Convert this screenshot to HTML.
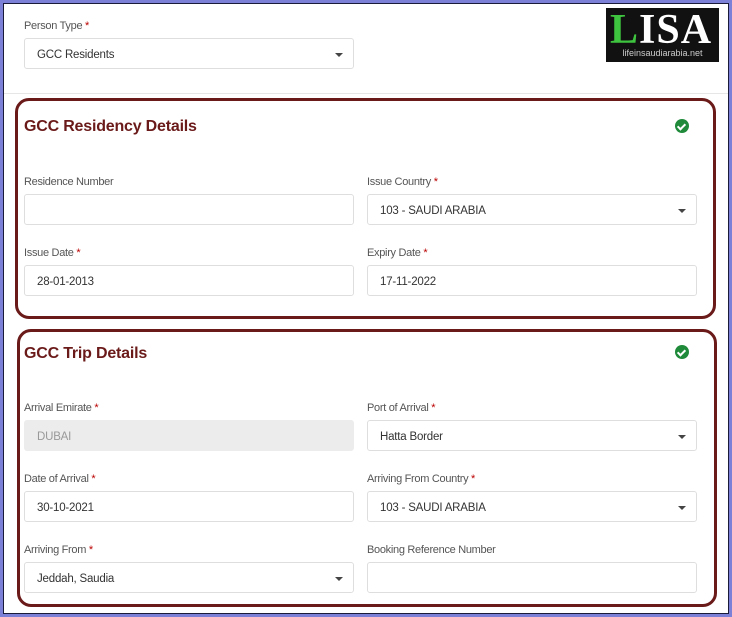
<!DOCTYPE html>
<html><head><style>
*{box-sizing:border-box;margin:0;padding:0}
body{width:732px;height:617px;background:#7c80d6;font-family:"Liberation Sans",sans-serif;position:relative;overflow:hidden}
.frame{position:absolute;left:3px;top:3px;width:726px;height:611px;border:1px solid #1a1a3a;background:#fff}
.abs{position:absolute}
.lbl{position:absolute;font-size:11px;color:#555;letter-spacing:-0.3px}
.lbl b{color:#b00;font-weight:normal}
.in{position:absolute;height:31px;border:1px solid #dedede;border-radius:3px;background:#fff;font-size:11.5px;color:#333;padding:0 12px;line-height:33px;letter-spacing:-0.2px}
.sel:after{content:"";position:absolute;right:10px;top:14px;border-left:4px solid transparent;border-right:4px solid transparent;border-top:4px solid #444}
.box{position:absolute;border:3px solid #6b1a1a;border-radius:14px}
.h{position:absolute;font-size:16px;font-weight:bold;color:#6b1a1a;letter-spacing:-0.2px}
.ck{position:absolute;width:14px;height:14px;border-radius:50%;background:#1e8a3a}
.ck:after{content:"";position:absolute;left:4px;top:2.5px;width:3px;height:6px;border:solid #fff;border-width:0 2px 2px 0;transform:rotate(45deg)}
</style></head><body>
<div class="frame"></div>
<div class="abs" style="left:4px;top:93px;width:724px;height:1px;background:#e6e6e6"></div>
<div class="lbl" style="left:24px;top:20px">Person Type <b>*</b></div>
<div class="in sel" style="left:24px;top:38px;width:330px">GCC Residents</div>
<div class="abs" style="left:606px;top:8px;width:113px;height:54px;background:#111">
<div class="abs" style="left:4px;top:0;font-family:'Liberation Serif',serif;font-weight:bold;font-size:42px;line-height:44px;letter-spacing:1px"><span style="color:#3ec43e">L</span><span style="color:#fff">ISA</span></div>
<div class="abs" style="left:0;width:113px;top:40px;text-align:center;color:#ccc;font-size:9px">lifeinsaudiarabia.net</div>
</div>

<div class="box" style="left:15px;top:98px;width:701px;height:221px"></div>
<div class="h" style="left:24px;top:118px">GCC Residency Details</div>
<div class="ck" style="left:675px;top:119px"></div>
<div class="lbl" style="left:24px;top:176px">Residence Number</div>
<div class="in" style="left:24px;top:194px;width:330px"></div>
<div class="lbl" style="left:367px;top:176px">Issue Country <b>*</b></div>
<div class="in sel" style="left:367px;top:194px;width:330px">103 - SAUDI ARABIA</div>
<div class="lbl" style="left:24px;top:247px">Issue Date <b>*</b></div>
<div class="in" style="left:24px;top:265px;width:330px">28-01-2013</div>
<div class="lbl" style="left:367px;top:247px">Expiry Date <b>*</b></div>
<div class="in" style="left:367px;top:265px;width:330px">17-11-2022</div>

<div class="box" style="left:17px;top:329px;width:700px;height:278px"></div>
<div class="h" style="left:24px;top:345px">GCC Trip Details</div>
<div class="ck" style="left:675px;top:345px"></div>
<div class="lbl" style="left:24px;top:402px">Arrival Emirate <b>*</b></div>
<div class="in" style="left:24px;top:420px;width:330px;background:#ececec;border-color:#ececec;color:#999">DUBAI</div>
<div class="lbl" style="left:367px;top:402px">Port of Arrival <b>*</b></div>
<div class="in sel" style="left:367px;top:420px;width:330px">Hatta Border</div>
<div class="lbl" style="left:24px;top:473px">Date of Arrival <b>*</b></div>
<div class="in" style="left:24px;top:491px;width:330px">30-10-2021</div>
<div class="lbl" style="left:367px;top:473px">Arriving From Country <b>*</b></div>
<div class="in sel" style="left:367px;top:491px;width:330px">103 - SAUDI ARABIA</div>
<div class="lbl" style="left:24px;top:544px">Arriving From <b>*</b></div>
<div class="in sel" style="left:24px;top:562px;width:330px">Jeddah, Saudia</div>
<div class="lbl" style="left:367px;top:544px">Booking Reference Number</div>
<div class="in" style="left:367px;top:562px;width:330px"></div>
</body></html>
